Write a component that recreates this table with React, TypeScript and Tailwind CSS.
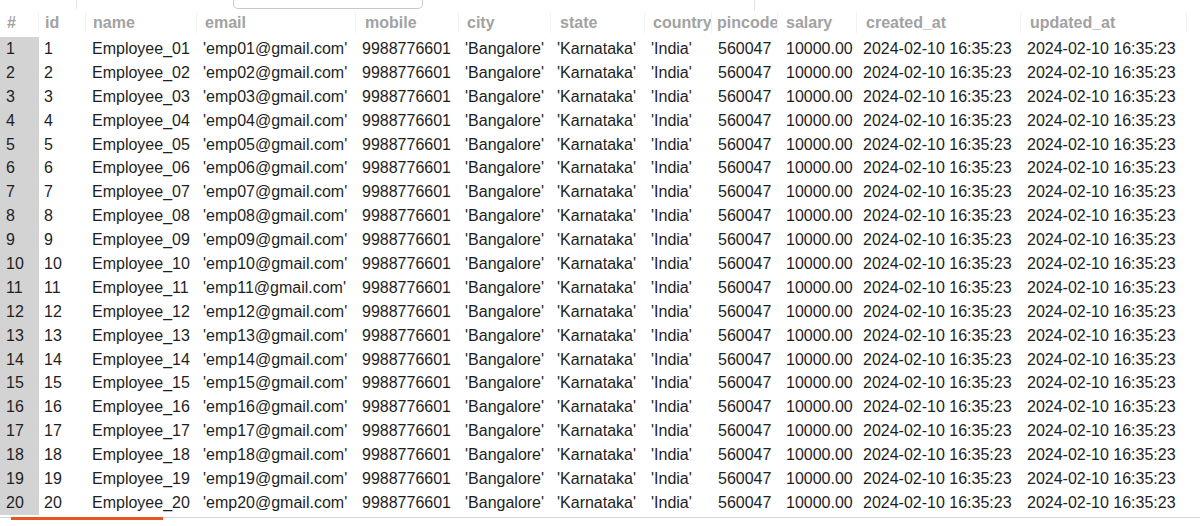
const columns = [
  { key: "#", w: "w-[39px]", hp: "pl-[7px]", dp: "pl-[6px]" },
  { key: "id", w: "w-[47px]", hp: "pl-[6px]", dp: "pl-[5px]" },
  { key: "name", w: "w-[111px]", hp: "pl-[7px]", dp: "pl-[6px]" },
  { key: "email", w: "w-[159px]", hp: "pl-[8px]", dp: "pl-[6px]" },
  { key: "mobile", w: "w-[103px]", hp: "pl-[9px]", dp: "pl-[6px]" },
  { key: "city", w: "w-[92px]", hp: "pl-[8px]", dp: "pl-[6px]" },
  { key: "state", w: "w-[94px]", hp: "pl-[9px]", dp: "pl-[6px]" },
  { key: "country", w: "w-[67px]", hp: "pl-[8px]", dp: "pl-[6px]" },
  { key: "pincode", w: "w-[66px]", hp: "pl-[5px]", dp: "pl-[6px]" },
  { key: "salary", w: "w-[79px]", hp: "pl-[8px]", dp: "pl-[8px]" },
  { key: "created_at", w: "w-[164px]", hp: "pl-[9px]", dp: "pl-[6px]" },
  { key: "updated_at", w: "w-[166px]", hp: "pl-[9px]", dp: "pl-[6px]" },
];

const rows = Array.from({ length: 20 }, (_, i) => {
  const n = String(i + 1).padStart(2, "0");
  return [
    String(i + 1),
    String(i + 1),
    `Employee_${n}`,
    `'emp${n}@gmail.com'`,
    "9988776601",
    "'Bangalore'",
    "'Karnataka'",
    "'India'",
    "560047",
    "10000.00",
    "2024-02-10 16:35:23",
    "2024-02-10 16:35:23",
  ];
});

export default function App() {
  return (
    <div className="w-[1200px] h-[526px] overflow-hidden bg-white font-['Liberation_Sans',Arial,sans-serif] text-[16px] text-[#1e1e1e]">
      {/* toolbar remnant at top */}
      <div className="flex h-[10px]">
        <div className="w-[76px]" />
        <div className="w-px h-[9px] bg-[#e2e2e2]" />
        <div className="w-[156px]" />
        <div className="w-[190px] h-[9px] border border-t-0 border-[#c9c9c9] rounded-b-[5px]" />
        <div className="w-[331px]" />
        <div className="w-px h-[10px] bg-[#e2e2e2]" />
      </div>

      {/* header */}
      <div className="flex h-[27px] pb-[4px] items-stretch">
        {columns.map((c) => (
          <div
            key={c.key}
            className={`${c.w} ${c.hp} shrink-0 overflow-hidden whitespace-nowrap font-bold text-[#a2a2a2] flex items-center border-r border-[#f2f2f2] mt-[2px]`}
          >
            {c.key}
          </div>
        ))}
      </div>

      {/* rows */}
      <div>
        {rows.map((r, ri) => (
          <div key={ri} className="flex h-[23.9px] items-center">
            {r.map((v, ci) => (
              <div
                key={ci}
                className={`${columns[ci].w} ${columns[ci].dp} shrink-0 h-full flex items-center whitespace-nowrap overflow-hidden ${ci === 0 ? "bg-[#d3d3d3]" : ""}`}
              >
                {v}
              </div>
            ))}
          </div>
        ))}
      </div>

      {/* bottom tab strip */}
      <div className="h-[3px] mt-[2px] border-t border-[#d6d6d6]">
        <div className="ml-[11px] w-[152px] h-[3px] bg-[#e95420] -mt-px" />
      </div>
    </div>
  );
}
